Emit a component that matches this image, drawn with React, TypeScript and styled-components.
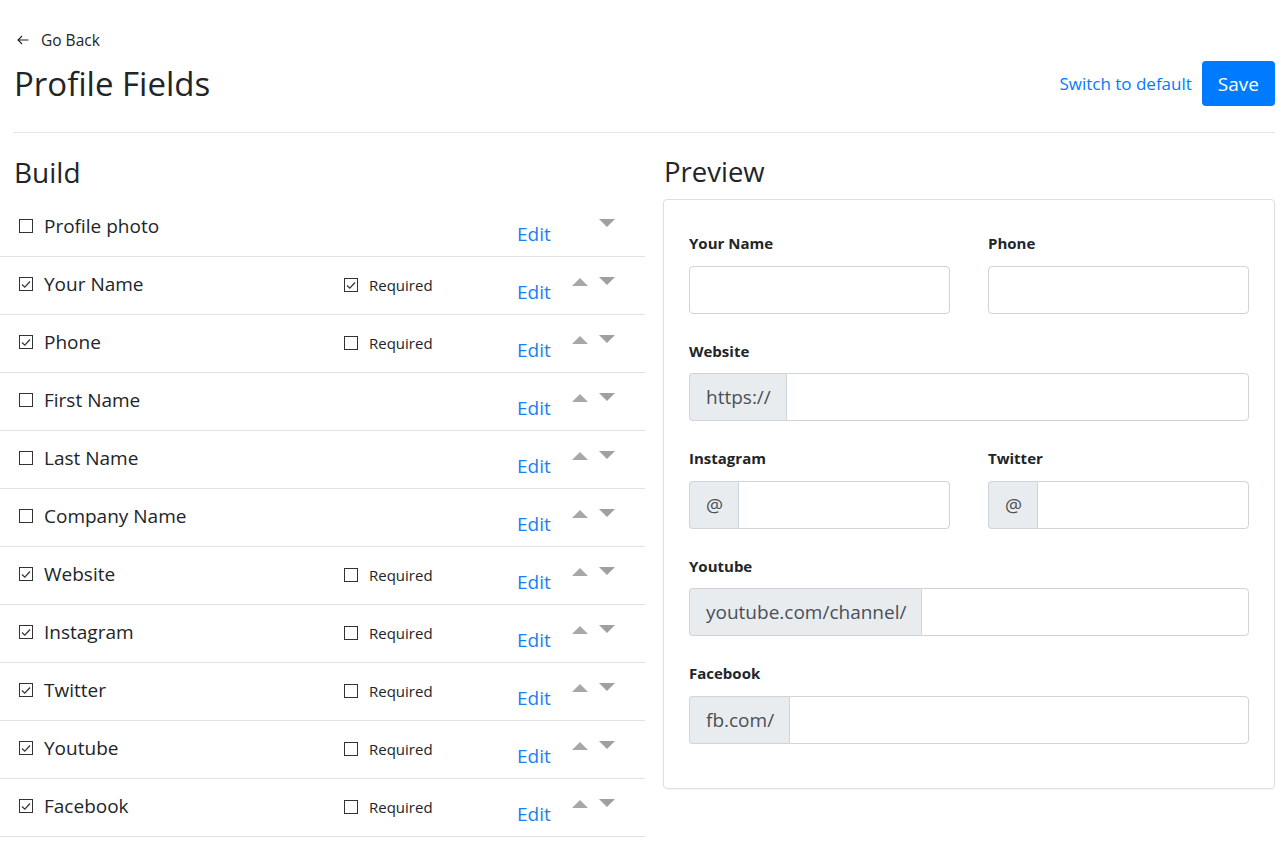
import React from "react";
import styled, { createGlobalStyle } from "styled-components";

const GlobalStyle = createGlobalStyle`
  html, body { margin: 0; padding: 0; background: #fff; }
  body {
    font-family: "Open Sans", "Noto Sans", "Liberation Sans", sans-serif;
    color: #212529;
  }
  * { box-sizing: border-box; }
`;

const Page = styled.div`
  width: 1288px;
  padding-top: 30px;
`;

const Header = styled.header`
  padding: 0 13px 0 14px;
`;

const BackLink = styled.a`
  display: flex;
  align-items: center;
  gap: 12px;
  height: 20px;
  padding-left: 3px;
  font-size: 15.5px;
  line-height: 20px;
  color: #212529;
  text-decoration: none;
`;

const TitleRow = styled.div`
  display: flex;
  align-items: center;
  justify-content: space-between;
  margin-top: 11px;
  height: 45px;
`;

const Title = styled.h1`
  margin: 0;
  font-size: 33px;
  font-weight: 400;
  line-height: 38px;
`;

const Actions = styled.div`
  display: flex;
  align-items: center;
  gap: 10px;
`;

const TextButton = styled.a`
  font-size: 17px;
  color: #007bff;
  text-decoration: none;
`;

const PrimaryButton = styled.button`
  height: 45px;
  padding: 0 16px;
  border: none;
  border-radius: 4px;
  background: #007bff;
  color: #fff;
  font-family: inherit;
  font-size: 19px;
`;

const Divider = styled.hr`
  margin: 26px 0 0;
  border: none;
  border-top: 1px solid #e3e3e3;
`;

const Body = styled.div`
  display: grid;
  grid-template-columns: 645px minmax(0, 1fr);
`;

const BuildColumn = styled.section``;

const PreviewColumn = styled.section`
  padding: 0 13px 0 18px;
`;

const SectionTitle = styled.h2<{ $indent: number; $size: number }>`
  margin: 0;
  padding: 22px 0 10px ${(p) => p.$indent}px;
  font-size: ${(p) => p.$size}px;
  font-weight: 400;
  line-height: 34px;
`;

const FieldRow = styled.div`
  display: grid;
  grid-template-columns: 325px 173px 55px 27px 1fr;
  align-items: start;
  height: 58px;
  padding-left: 19px;
  border-bottom: 1px solid #e1e1e6;
`;

const CheckLabel = styled.label<{ $size: number; $top: number }>`
  display: flex;
  align-items: center;
  gap: 11px;
  margin-top: ${(p) => p.$top}px;
  height: 20px;
  font-size: ${(p) => p.$size}px;
  line-height: 20px;
  color: #212529;
`;

const Box = styled.span`
  display: inline-flex;
  align-items: center;
  justify-content: center;
  width: 14px;
  height: 14px;
  border: 1px solid #333;
  background: #fff;
  flex: none;
`;

const EditLink = styled.a`
  margin-top: 23px;
  font-size: 19px;
  line-height: 24px;
  color: #1a7ef5;
  text-decoration: none;
`;

const Arrow = styled.span<{ $dir: "up" | "down"; $hidden?: boolean }>`
  display: block;
  width: 0;
  height: 0;
  margin-top: ${(p) => (p.$dir === "up" ? 21 : 20)}px;
  border-left: 8px solid transparent;
  border-right: 8px solid transparent;
  ${(p) =>
    p.$dir === "up"
      ? "border-bottom: 8px solid #a8a8a8;"
      : "border-top: 8px solid #a0a0a0;"}
  visibility: ${(p) => (p.$hidden ? "hidden" : "visible")};
`;

const Card = styled.div`
  border: 1px solid #dedede;
  border-radius: 4px;
  padding: 33px 25px 17px;
  box-shadow: 0 1px 2px rgba(0, 0, 0, 0.04);
`;

const FormGrid = styled.div`
  display: grid;
  grid-template-columns: minmax(0, 1fr) minmax(0, 1fr);
  column-gap: 38px;
`;

const FormGroup = styled.div<{ $wide?: boolean }>`
  grid-column: ${(p) => (p.$wide ? "1 / -1" : "auto")};
  margin-bottom: 27px;
  min-width: 0;
`;

const FieldLabel = styled.div`
  margin-bottom: 12.5px;
  font-size: 15px;
  font-weight: 700;
  line-height: 20px;
  color: #212529;
`;

const InputGroup = styled.div`
  display: flex;
  height: 48px;
  width: 100%;
`;

const Prefix = styled.span`
  display: flex;
  align-items: center;
  padding: 0 15px 0 16px;
  border: 1px solid #ced4da;
  border-right: none;
  border-radius: 4px 0 0 4px;
  background: #e9ecef;
  font-size: 19px;
  color: #495057;
  white-space: nowrap;
`;

const TextInput = styled.input<{ $attached?: boolean }>`
  display: block;
  flex: 1;
  width: 100%;
  min-width: 0;
  height: 48px;
  border: 1px solid #ced4da;
  border-radius: ${(p) => (p.$attached ? "0 4px 4px 0" : "4px")};
  font-family: inherit;
  font-size: 18px;
  padding: 0 16px;
  outline: none;
`;

const CheckBox = ({ checked }: { checked: boolean }) => (
  <Box>
    {checked && (
      <svg width="10" height="9" viewBox="0 0 10 9">
        <path d="M1 4.5 L3.8 7.2 L9 1.5" fill="none" stroke="#333" strokeWidth="1.2" />
      </svg>
    )}
  </Box>
);

type Field = { name: string; on: boolean; required?: boolean | null };

const fields: Field[] = [
  { name: "Profile photo", on: false, required: null },
  { name: "Your Name", on: true, required: true },
  { name: "Phone", on: true, required: false },
  { name: "First Name", on: false, required: null },
  { name: "Last Name", on: false, required: null },
  { name: "Company Name", on: false, required: null },
  { name: "Website", on: true, required: false },
  { name: "Instagram", on: true, required: false },
  { name: "Twitter", on: true, required: false },
  { name: "Youtube", on: true, required: false },
  { name: "Facebook", on: true, required: false },
];

const PrefixedInput = ({ prefix }: { prefix: string }) => (
  <InputGroup>
    <Prefix>{prefix}</Prefix>
    <TextInput $attached />
  </InputGroup>
);

export default function App() {
  return (
    <Page>
      <GlobalStyle />
      <Header>
        <BackLink href="#">
          <svg width="12" height="10" viewBox="0 0 12 10">
            <path d="M11.5 5 H1 M5 1 L1 5 L5 9" fill="none" stroke="#212529" strokeWidth="1.1" />
          </svg>
          Go Back
        </BackLink>
        <TitleRow>
          <Title>Profile Fields</Title>
          <Actions>
            <TextButton href="#">Switch to default</TextButton>
            <PrimaryButton>Save</PrimaryButton>
          </Actions>
        </TitleRow>
        <Divider />
      </Header>
      <Body>
        <BuildColumn>
          <SectionTitle $indent={14} $size={28}>Build</SectionTitle>
          {fields.map((f, i) => (
            <FieldRow key={f.name}>
              <CheckLabel $size={19} $top={17}>
                <CheckBox checked={f.on} />
                {f.name}
              </CheckLabel>
              <div>
                {f.required !== null && (
                  <CheckLabel $size={15} $top={18}>
                    <CheckBox checked={!!f.required} />
                    Required
                  </CheckLabel>
                )}
              </div>
              <EditLink href="#">Edit</EditLink>
              <Arrow $dir="up" $hidden={i === 0} />
              <Arrow $dir="down" />
            </FieldRow>
          ))}
        </BuildColumn>
        <PreviewColumn>
          <SectionTitle $indent={1} $size={27.5}>Preview</SectionTitle>
          <Card>
            <FormGrid>
              <FormGroup>
                <FieldLabel>Your Name</FieldLabel>
                <TextInput />
              </FormGroup>
              <FormGroup>
                <FieldLabel>Phone</FieldLabel>
                <TextInput />
              </FormGroup>
              <FormGroup $wide>
                <FieldLabel>Website</FieldLabel>
                <PrefixedInput prefix="https://" />
              </FormGroup>
              <FormGroup>
                <FieldLabel>Instagram</FieldLabel>
                <PrefixedInput prefix="@" />
              </FormGroup>
              <FormGroup>
                <FieldLabel>Twitter</FieldLabel>
                <PrefixedInput prefix="@" />
              </FormGroup>
              <FormGroup $wide>
                <FieldLabel>Youtube</FieldLabel>
                <PrefixedInput prefix="youtube.com/channel/" />
              </FormGroup>
              <FormGroup $wide>
                <FieldLabel>Facebook</FieldLabel>
                <PrefixedInput prefix="fb.com/" />
              </FormGroup>
            </FormGrid>
          </Card>
        </PreviewColumn>
      </Body>
    </Page>
  );
}
